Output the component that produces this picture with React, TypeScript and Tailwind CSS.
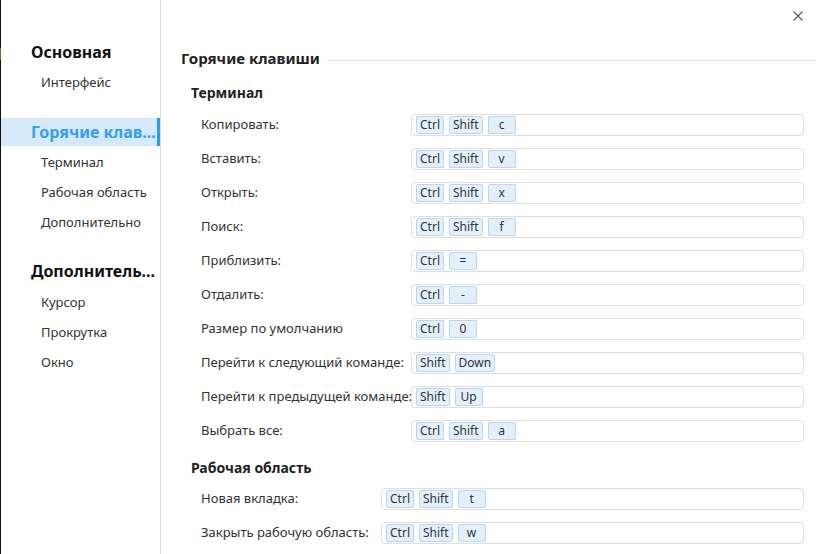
import React from "react";

const font = { fontFamily: '"Noto Sans", "Open Sans", sans-serif' };

type Row = { label: string; keys: string[] };

const terminal: Row[] = [
  { label: "Копировать:", keys: ["Ctrl", "Shift", "c"] },
  { label: "Вставить:", keys: ["Ctrl", "Shift", "v"] },
  { label: "Открыть:", keys: ["Ctrl", "Shift", "x"] },
  { label: "Поиск:", keys: ["Ctrl", "Shift", "f"] },
  { label: "Приблизить:", keys: ["Ctrl", "="] },
  { label: "Отдалить:", keys: ["Ctrl", "-"] },
  { label: "Размер по умолчанию", keys: ["Ctrl", "0"] },
  { label: "Перейти к следующий команде:", keys: ["Shift", "Down"] },
  { label: "Перейти к предыдущей команде:", keys: ["Shift", "Up"] },
  { label: "Выбрать все:", keys: ["Ctrl", "Shift", "a"] },
];

const workspace: Row[] = [
  { label: "Новая вкладка:", keys: ["Ctrl", "Shift", "t"] },
  { label: "Закрыть рабочую область:", keys: ["Ctrl", "Shift", "w"] },
];

function Key({ k }: { k: string }) {
  return (
    <span className="inline-flex h-[18px] min-w-[28px] items-center justify-center rounded-[2px] border border-[#b9d7f3] bg-[#e3f0fc] px-[3px] text-[12px] leading-none text-[#333]">
      {k}
    </span>
  );
}

function Table({ rows, labelW }: { rows: Row[]; labelW: string }) {
  return (
    <div className="flex flex-col gap-[12px] pl-[20px]">
      {rows.map((r) => (
        <div key={r.label} className="flex h-[22px] items-center">
          <div className={`${labelW} shrink-0 whitespace-nowrap text-[13px] text-[#333]`}>{r.label}</div>
          <div className="flex h-[22px] flex-1 items-center gap-[5px] rounded-[4px] border border-[#dedede] bg-white pl-[4px]">
            {r.keys.map((k, i) => (
              <Key key={i} k={k} />
            ))}
          </div>
        </div>
      ))}
    </div>
  );
}

export default function App() {
  return (
    <div className="flex h-[554px] w-[831px] overflow-hidden bg-white" style={font}>
      <div className="relative w-[1px] shrink-0 bg-[#111]">
        <div className="absolute left-0 top-[48px] h-[12px] w-[1px] bg-[#4a8a1a]" />
      </div>
      <div className="flex w-[160px] shrink-0 flex-col border-r border-[#dcdcdc] pt-[40px]">
        <div className="h-[24px] pl-[30px] text-[16px] font-bold leading-[24px] text-[#111]">Основная</div>
        <div className="mt-[3px] h-[30px] pl-[40px] text-[13px] leading-[30px] text-[#333]">Интерфейс</div>
        <div className="mt-[21px] flex h-[28px] items-center border-r-[3px] border-[#2b9bf4] bg-[#d5e9fb] pl-[30px] text-[16px] font-bold text-[#34a0f5]">
          <span className="whitespace-nowrap">Горячие клав...</span>
        </div>
        <div className="mt-[1px] h-[30px] pl-[40px] text-[13px] leading-[30px] text-[#333]">Терминал</div>
        <div className="h-[30px] pl-[40px] text-[13px] leading-[30px] text-[#333]">Рабочая область</div>
        <div className="h-[30px] pl-[40px] text-[13px] leading-[30px] text-[#333]">Дополнительно</div>
        <div className="mt-[22px] h-[24px] whitespace-nowrap pl-[30px] text-[16px] font-bold leading-[24px] text-[#111]">Дополнитель...</div>
        <div className="mt-[4px] h-[30px] pl-[40px] text-[13px] leading-[30px] text-[#333]">Курсор</div>
        <div className="h-[30px] pl-[40px] text-[13px] leading-[30px] text-[#333]">Прокрутка</div>
        <div className="h-[30px] pl-[40px] text-[13px] leading-[30px] text-[#333]">Окно</div>
      </div>
      <div className="relative flex-1 pl-[20px] pr-[27px]">
        <button className="absolute right-[28px] top-[11px] text-[#555]">
          <svg width="10" height="10" viewBox="0 0 10 10" fill="none" stroke="currentColor" strokeWidth="1.1">
            <path d="M0.5 0.5 L9.5 9.5 M9.5 0.5 L0.5 9.5" />
          </svg>
        </button>
        <div className="mt-[47px] flex items-center">
          <div className="text-[15px] font-bold text-[#222]">Горячие клавиши</div>
          <div className="ml-[7px] mr-[-12px] mt-[4px] h-[1px] flex-1 bg-[#e2e2e2]" />
        </div>
        <div className="mt-[13px] pl-[10px] text-[14px] font-bold leading-[20px] text-[#222]">Терминал</div>
        <div className="mt-[11px]">
          <Table rows={terminal} labelW="w-[210px]" />
        </div>
        <div className="mt-[16px] pl-[10px] text-[14px] font-bold leading-[20px] text-[#222]">Рабочая область</div>
        <div className="mt-[10px]">
          <Table rows={workspace} labelW="w-[180px]" />
        </div>
      </div>
    </div>
  );
}
